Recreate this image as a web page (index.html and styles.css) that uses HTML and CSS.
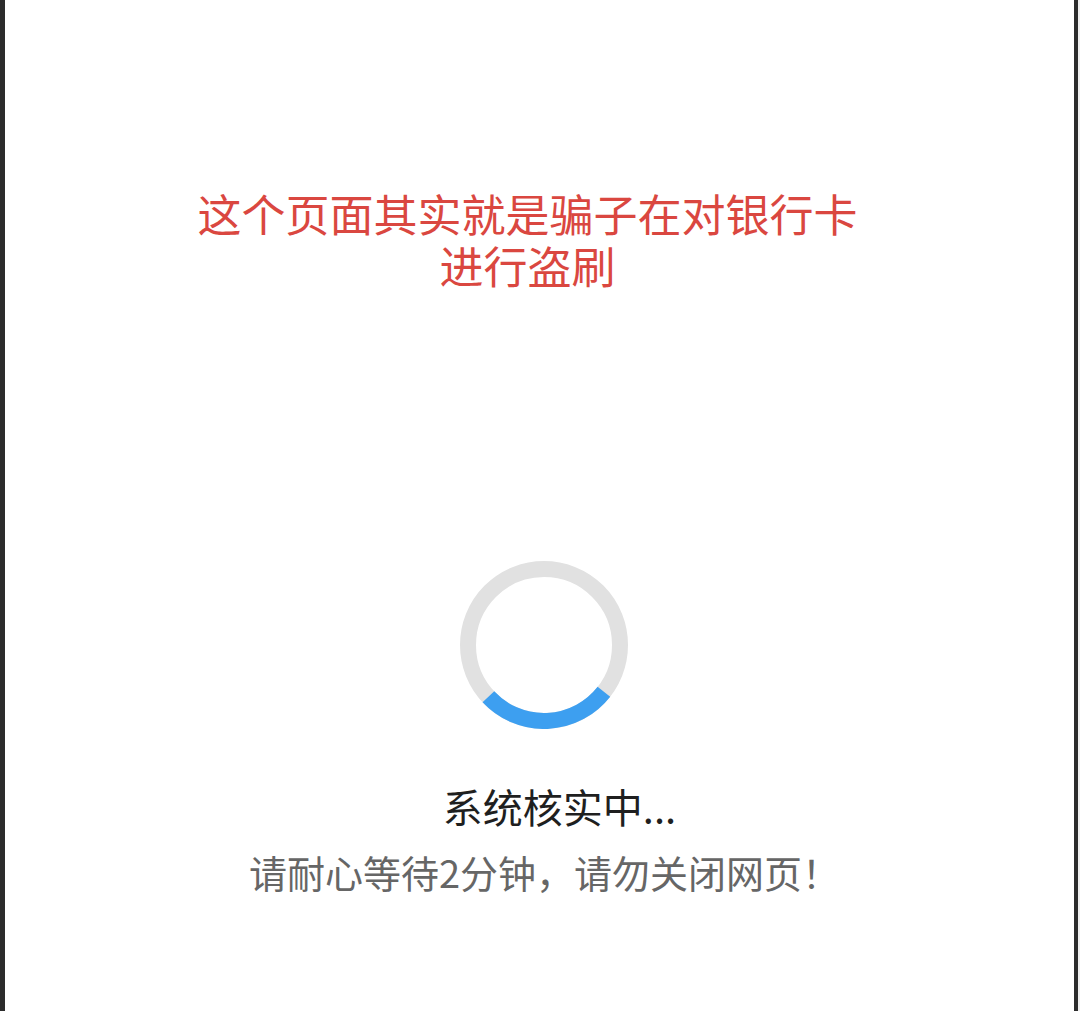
FILE: index.html
```html
<!DOCTYPE html>
<html lang="zh-CN">
<head>
<meta charset="utf-8">
<title>系统核实中</title>
<link rel="stylesheet" href="styles.css">
</head>
<body>
<div class="frame">
  <div class="note">
    <p class="note-line">这个页面其实就是骗子在对银行卡</p>
    <p class="note-line">进行盗刷</p>
  </div>
  <div class="spinner">
    <svg width="168" height="168" viewBox="0 0 168 168">
      <circle cx="84" cy="84" r="76" fill="none" stroke="#e1e1e1" stroke-width="16"/>
      <path d="M143.9 130.8 A76 76 0 0 1 28.4 135.8" fill="none" stroke="#3d9ff0" stroke-width="16"/>
    </svg>
  </div>
  <p class="status">系统核实中...</p>
  <p class="hint">请耐心等待2分钟，请勿关闭网页！</p>
</div>
</body>
</html>
```

FILE: styles.css
```css
html, body {
  margin: 0;
  padding: 0;
  background: #efefef;
}
body {
  width: 1080px;
  height: 1011px;
  overflow: hidden;
  font-family: "Noto Sans CJK SC", "Noto Sans", sans-serif;
}
.frame {
  box-sizing: border-box;
  width: 1078px;
  height: 1011px;
  background: #ffffff;
  border-left: 5px solid #2c2c2c;
  border-right: 4px solid #2c2c2c;
  display: flex;
  flex-direction: column;
  align-items: stretch;
}
.note {
  margin-top: 187px;
  padding-right: 24px;
  text-align: center;
  color: #da4740;
  font-size: 44px;
  line-height: 52px;
}
.note-line {
  margin: 0;
}
.spinner {
  margin-top: 270px;
  display: flex;
  justify-content: center;
  padding-left: 8px;
  height: 168px;
}
.spinner svg {
  display: block;
}
.status {
  margin: 52px 0 0;
  padding-left: 40px;
  text-align: center;
  color: #1f1f1f;
  font-size: 40px;
  line-height: 50px;
}
.hint {
  margin: 18px 0 0;
  padding-left: 10px;
  text-align: center;
  color: #666666;
  font-size: 38px;
  line-height: 46px;
}
```
